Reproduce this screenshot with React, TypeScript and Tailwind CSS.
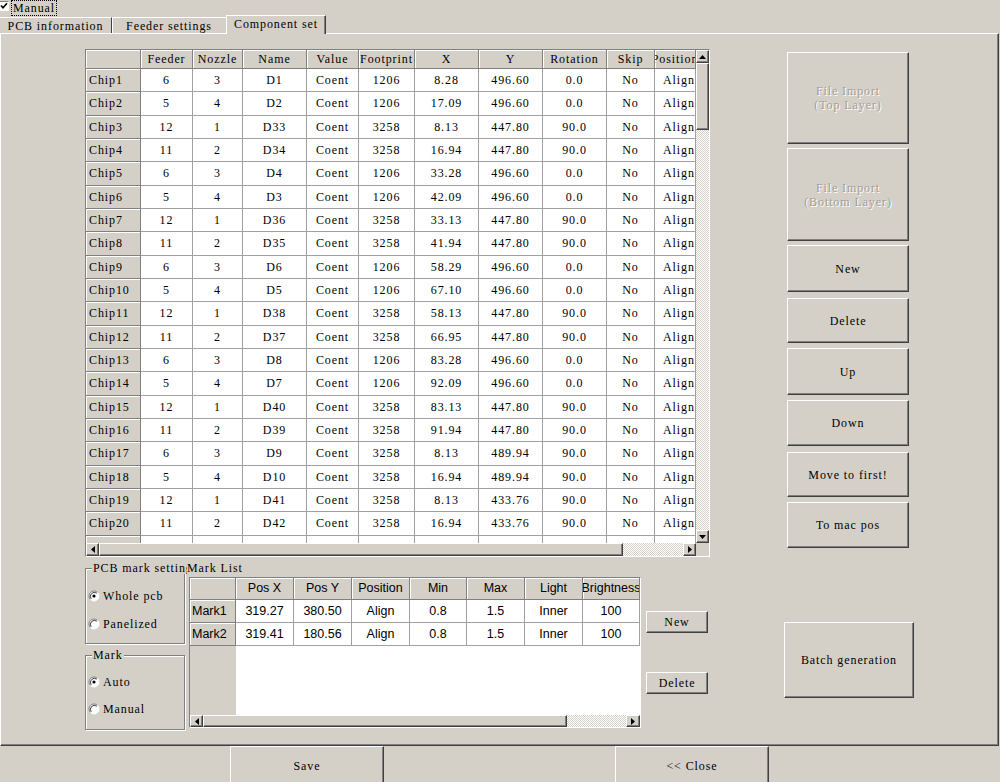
import React from "react";

const CHIPS: string[][] = [
  ["6", "3", "D1", "1206", "8.28", "496.60", "0.0"],
  ["5", "4", "D2", "1206", "17.09", "496.60", "0.0"],
  ["12", "1", "D33", "3258", "8.13", "447.80", "90.0"],
  ["11", "2", "D34", "3258", "16.94", "447.80", "90.0"],
  ["6", "3", "D4", "1206", "33.28", "496.60", "0.0"],
  ["5", "4", "D3", "1206", "42.09", "496.60", "0.0"],
  ["12", "1", "D36", "3258", "33.13", "447.80", "90.0"],
  ["11", "2", "D35", "3258", "41.94", "447.80", "90.0"],
  ["6", "3", "D6", "1206", "58.29", "496.60", "0.0"],
  ["5", "4", "D5", "1206", "67.10", "496.60", "0.0"],
  ["12", "1", "D38", "3258", "58.13", "447.80", "90.0"],
  ["11", "2", "D37", "3258", "66.95", "447.80", "90.0"],
  ["6", "3", "D8", "1206", "83.28", "496.60", "0.0"],
  ["5", "4", "D7", "1206", "92.09", "496.60", "0.0"],
  ["12", "1", "D40", "3258", "83.13", "447.80", "90.0"],
  ["11", "2", "D39", "3258", "91.94", "447.80", "90.0"],
  ["6", "3", "D9", "3258", "8.13", "489.94", "90.0"],
  ["5", "4", "D10", "3258", "16.94", "489.94", "90.0"],
  ["12", "1", "D41", "3258", "8.13", "433.76", "90.0"],
  ["11", "2", "D42", "3258", "16.94", "433.76", "90.0"],
];

const COLS = [
  { label: "Feeder", w: "w-[52px]" },
  { label: "Nozzle", w: "w-[50px]" },
  { label: "Name", w: "w-[64px]" },
  { label: "Value", w: "w-[52px]" },
  { label: "Footprint", w: "w-[56px]" },
  { label: "X", w: "w-[64px]" },
  { label: "Y", w: "w-[64px]" },
  { label: "Rotation", w: "w-[64px]" },
  { label: "Skip", w: "w-[48px]" },
  { label: "Position", w: "w-[41px]" },
];

const MARK_COLS = [
  { label: "Pos X", w: "w-[58px]" },
  { label: "Pos Y", w: "w-[58px]" },
  { label: "Position", w: "w-[58px]" },
  { label: "Min", w: "w-[57px]" },
  { label: "Max", w: "w-[58px]" },
  { label: "Light", w: "w-[58px]" },
  { label: "Brightness", w: "w-[57px]" },
];

const MARKS = [
  ["319.27", "380.50", "Align", "0.8", "1.5", "Inner", "100"],
  ["319.41", "180.56", "Align", "0.8", "1.5", "Inner", "100"],
];

const raised =
  "bg-[#d4d0c8] border border-t-white border-l-white border-r-[#404040] border-b-[#404040] shadow-[inset_-1px_-1px_0_#808080]";
const headCell =
  "shrink-0 flex items-center justify-center overflow-hidden whitespace-nowrap bg-[#d4d0c8] border-r border-b border-[#808080] shadow-[inset_1px_1px_0_#fff]";
const dataCell =
  "shrink-0 h-full flex items-center justify-center overflow-hidden whitespace-nowrap bg-white border-r border-b border-[#a0a0a0]";
const dither =
  "bg-[repeating-conic-gradient(#ffffff_0_25%,#d4d0c8_0_50%)] bg-[length:2px_2px]";

function Button({
  children,
  className,
  disabled,
}: {
  children: React.ReactNode;
  className: string;
  disabled?: boolean;
}) {
  return (
    <div
      className={`${raised} shrink-0 flex flex-col items-center justify-center text-center leading-[14px] ${
        disabled ? "text-[#a29f98] [text-shadow:1px_1px_0_#fff]" : ""
      } ${className}`}
    >
      {children}
    </div>
  );
}

function Arrow({ dir, className }: { dir: "up" | "down" | "left" | "right"; className: string }) {
  const pts = {
    up: "0,4 3.5,0 7,4",
    down: "0,0 3.5,4 7,0",
    left: "4,0 0,3.5 4,7",
    right: "0,0 4,3.5 0,7",
  }[dir];
  const vert = dir === "up" || dir === "down";
  return (
    <div className={`${raised} shrink-0 flex items-center justify-center ${className}`}>
      <svg width={vert ? 7 : 4} height={vert ? 4 : 7} viewBox={vert ? "0 0 7 4" : "0 0 4 7"}>
        <polygon points={pts} fill="#000" />
      </svg>
    </div>
  );
}

function Radio({ checked, label }: { checked?: boolean; label: string }) {
  return (
    <div className="flex items-center h-[14px] pl-[2px] gap-[3px]">
      <svg width="12" height="12" viewBox="0 0 12 12">
        <circle cx="6" cy="6" r="5" fill="#fff" />
        <path d="M2.46 9.54 A5 5 0 0 1 9.54 2.46" fill="none" stroke="#808080" />
        <path d="M9.54 2.46 A5 5 0 0 1 2.46 9.54" fill="none" stroke="#fff" />
        <path d="M3.2 8.8 A4 4 0 0 1 8.8 3.2" fill="none" stroke="#404040" />
        {checked && <circle cx="6" cy="6" r="1.6" fill="#000" />}
      </svg>
      <span>{label}</span>
    </div>
  );
}

function GroupBox({
  title,
  className,
  titleClass,
  children,
}: {
  title: string;
  className: string;
  titleClass?: string;
  children: React.ReactNode;
}) {
  return (
    <div
      className={`relative w-[100px] border border-[#808080] shadow-[inset_1px_1px_0_#fff,1px_1px_0_#fff] flex flex-col ${className}`}
    >
      <span
        className={`absolute -top-[7px] left-[6px] bg-[#d4d0c8] px-[1px] leading-[12px] whitespace-nowrap ${
          titleClass ?? ""
        }`}
      >
        {title}
      </span>
      {children}
    </div>
  );
}

function ComponentGrid() {
  return (
    <div className="w-[625px] h-[508px] shrink-0 border border-t-[#808080] border-l-[#808080] border-r-white border-b-white flex flex-col">
      <div className="flex h-[493px]">
        <div className="w-[610px] h-full overflow-hidden flex flex-col bg-white">
          <div className="flex h-[19px] shrink-0">
            <div className={`${headCell} h-full w-[55px]`} />
            {COLS.map((c) => (
              <div key={c.label} className={`${headCell} h-full ${c.w}`}>
                <span>{c.label}</span>
              </div>
            ))}
          </div>
          {CHIPS.map((r, i) => (
            <div key={i} className="flex h-[23.33px] shrink-0">
              <div className={`${headCell} h-full w-[55px] justify-start pl-[3px]`}>Chip{i + 1}</div>
              <div className={`${dataCell} ${COLS[0].w}`}>{r[0]}</div>
              <div className={`${dataCell} ${COLS[1].w}`}>{r[1]}</div>
              <div className={`${dataCell} ${COLS[2].w}`}>{r[2]}</div>
              <div className={`${dataCell} ${COLS[3].w}`}>Coent</div>
              <div className={`${dataCell} ${COLS[4].w}`}>{r[3]}</div>
              <div className={`${dataCell} ${COLS[5].w}`}>{r[4]}</div>
              <div className={`${dataCell} ${COLS[6].w}`}>{r[5]}</div>
              <div className={`${dataCell} ${COLS[7].w}`}>{r[6]}</div>
              <div className={`${dataCell} ${COLS[8].w}`}>No</div>
              <div className={`${dataCell} ${COLS[9].w} justify-start pl-[8px]`}>Align</div>
            </div>
          ))}
          <div className="flex h-[23.33px] shrink-0">
            <div className={`${headCell} h-full w-[55px]`} />
            {COLS.map((c) => (
              <div key={c.label} className={`${dataCell} ${c.w}`} />
            ))}
          </div>
        </div>
        <div className="w-[13px] h-full flex flex-col">
          <Arrow dir="up" className="h-[13px]" />
          <div className={`${raised} h-[67px] shrink-0`} />
          <div className={`flex-1 ${dither}`} />
          <Arrow dir="down" className="h-[13px]" />
        </div>
      </div>
      <div className="flex h-[13px]">
        <Arrow dir="left" className="w-[13px]" />
        <div className={`${raised} w-[524px] shrink-0`} />
        <div className={`flex-1 ${dither}`} />
        <Arrow dir="right" className="w-[13px]" />
        <div className="w-[13px] shrink-0 bg-[#d4d0c8]" />
      </div>
    </div>
  );
}

function MarkGrid() {
  return (
    <div className="ml-[2px] mt-[2px] w-[452px] h-[151px] border border-t-[#808080] border-l-[#808080] border-r-white border-b-white flex flex-col [font-family:'Liberation_Sans',Arial,sans-serif] tracking-normal text-[12.5px]">
      <div className="flex h-[22px] shrink-0">
        <div className={`${headCell} h-full w-[46px]`} />
        {MARK_COLS.map((c) => (
          <div key={c.label} className={`${headCell} h-full ${c.w}`}>
            <span>{c.label}</span>
          </div>
        ))}
      </div>
      <div className="flex flex-1 min-h-0">
        <div className="w-[46px] shrink-0 flex flex-col bg-[#d4d0c8]">
          {MARKS.map((_, i) => (
            <div key={i} className={`${headCell} w-[46px] h-[23px] justify-start pl-[2px]`}>
              Mark{i + 1}
            </div>
          ))}
        </div>
        <div className="flex-1 bg-white flex flex-col">
          {MARKS.map((m, i) => (
            <div key={i} className="flex h-[23px] shrink-0">
              {m.map((v, j) => (
                <div key={j} className={`${dataCell} ${MARK_COLS[j].w}`}>
                  {v}
                </div>
              ))}
            </div>
          ))}
        </div>
      </div>
      <div className="flex h-[12px] shrink-0">
        <Arrow dir="left" className="w-[13px]" />
        <div className={`${raised} w-[364px] shrink-0`} />
        <div className={`flex-1 ${dither}`} />
        <Arrow dir="right" className="w-[14px]" />
      </div>
    </div>
  );
}

export default function App() {
  return (
    <div className="w-[1000px] h-[782px] overflow-hidden bg-[#d4d0c8] text-black [font-family:'Liberation_Serif','Times_New_Roman',serif] text-[12px] tracking-[0.9px] leading-none flex flex-col select-none">
      {/* manual checkbox */}
      <div className="h-[15px] shrink-0 flex items-start">
        <svg width="10" height="10" viewBox="0 0 10 10" className="ml-[-1px] mt-[1px]">
          <rect x="0" y="0" width="10" height="10" fill="#fff" />
          <path d="M0 9.5 V0.5 H9.5" fill="none" stroke="#808080" />
          <polyline points="2,4.5 4,6.8 8,2.2" fill="none" stroke="#000" strokeWidth="1.6" />
        </svg>
        <span className="ml-[2px] h-[16px] px-[1px] border border-dotted border-black leading-[14px]">
          Manual
        </span>
      </div>

      {/* tabs */}
      <div className="h-[18px] shrink-0 flex items-end">
        <div className="w-[112px] h-[16px] shrink-0 flex items-center justify-center border-t border-t-white border-r border-r-[#404040] shadow-[1px_0_0_#fff]">
          PCB information
        </div>
        <div className="w-[114px] h-[16px] shrink-0 flex items-center justify-center border-t border-t-white">
          Feeder settings
        </div>
        <div className="relative z-10 -mb-px w-[100px] h-[19px] shrink-0 flex items-center justify-center bg-[#d4d0c8] border-t border-l border-t-white border-l-white border-r border-r-[#404040] shadow-[inset_-1px_0_0_#808080] pb-[2px]">
          Component set
        </div>
      </div>

      {/* panel */}
      <div className="w-[999px] h-[713px] shrink-0 border border-t-white border-l-white border-r-[#404040] border-b-[#404040] shadow-[inset_-1px_-1px_0_#808080] pt-[15px] pl-[84px] flex flex-col">
        <div className="flex items-start h-[508px] shrink-0">
          <ComponentGrid />
          <div className="ml-[77px] mt-[3px] w-[122px] flex flex-col">
            <Button disabled className="h-[92px]">
              <span>File Import</span>
              <span>(Top Layer)</span>
            </Button>
            <Button disabled className="mt-[4px] h-[93px]">
              <span>File Import</span>
              <span>(Bottom Layer)</span>
            </Button>
            <Button className="mt-[4px] h-[47px]">New</Button>
            <Button className="mt-[6px] h-[45px]">Delete</Button>
            <Button className="mt-[5px] h-[47px]">Up</Button>
            <Button className="mt-[5px] h-[46px]">Down</Button>
            <Button className="mt-[6px] h-[45px]">Move to first!</Button>
            <Button className="mt-[5px] h-[46px]">To mac pos</Button>
          </div>
        </div>

        <div className="flex items-start">
          <div className="w-[100px] shrink-0 flex flex-col">
            <GroupBox
              title="PCB mark setting"
              titleClass="w-[95px] overflow-hidden"
              className="mt-[11px] h-[76px] pt-[20px] gap-[14px]"
            >
              <Radio checked label="Whole pcb" />
              <Radio label="Panelized" />
            </GroupBox>
            <GroupBox title="Mark" className="mt-[11px] h-[75px] pt-[19px] gap-[13px]">
              <Radio checked label="Auto" />
              <Radio label="Manual" />
            </GroupBox>
          </div>

          <div className="ml-[2px] flex flex-col">
            <span className="mt-[4px] leading-[14px]">Mark List</span>
            <MarkGrid />
          </div>

          <div className="ml-[5px] w-[62px] flex flex-col">
            <Button className="mt-[54px] h-[22px]">New</Button>
            <Button className="mt-[39px] h-[22px]">Delete</Button>
          </div>

          <Button className="ml-[76px] mt-[65px] w-[130px] h-[76px]">Batch generation</Button>
        </div>
      </div>

      {/* bottom buttons */}
      <div className="flex items-start">
        <Button className="ml-[230px] w-[154px] h-[40px]">Save</Button>
        <Button className="ml-[231px] w-[154px] h-[40px]">&lt;&lt; Close</Button>
      </div>
    </div>
  );
}
